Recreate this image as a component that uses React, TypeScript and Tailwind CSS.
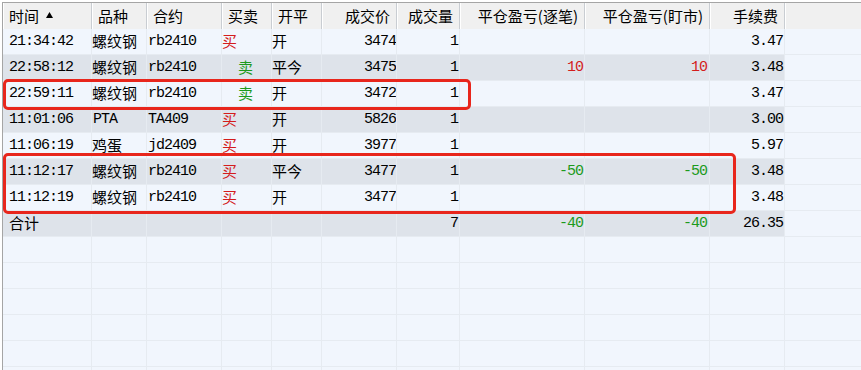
const COLS = [
  { key: 'time', label: '时间', w: 'w-[89px]', align: 'left' },
  { key: 'product', label: '品种', w: 'w-[55px]', align: 'left' },
  { key: 'contract', label: '合约', w: 'w-[75px]', align: 'left' },
  { key: 'side', label: '买卖', w: 'w-[50px]', align: 'left' },
  { key: 'offset', label: '开平', w: 'w-[50px]', align: 'left' },
  { key: 'price', label: '成交价', w: 'w-[75px]', align: 'right' },
  { key: 'vol', label: '成交量', w: 'w-[63px]', align: 'right' },
  { key: 'pnl1', label: '平仓盈亏(逐笔)', w: 'w-[125px]', align: 'right' },
  { key: 'pnl2', label: '平仓盈亏(盯市)', w: 'w-[125px]', align: 'right' },
  { key: 'fee', label: '手续费', w: 'w-[75px]', align: 'right' },
] as const;

type Trade = {
  time: string;
  product: string;
  contract: string;
  side: '买' | '卖' | '';
  offset: string;
  price: string;
  vol: string;
  pnl1: string;
  pnl2: string;
  fee: string;
};

const TRADES: Trade[] = [
  { time: '21:34:42', product: '螺纹钢', contract: 'rb2410', side: '买', offset: '开', price: '3474', vol: '1', pnl1: '', pnl2: '', fee: '3.47' },
  { time: '22:58:12', product: '螺纹钢', contract: 'rb2410', side: '卖', offset: '平今', price: '3475', vol: '1', pnl1: '10', pnl2: '10', fee: '3.48' },
  { time: '22:59:11', product: '螺纹钢', contract: 'rb2410', side: '卖', offset: '开', price: '3472', vol: '1', pnl1: '', pnl2: '', fee: '3.47' },
  { time: '11:01:06', product: 'PTA', contract: 'TA409', side: '买', offset: '开', price: '5826', vol: '1', pnl1: '', pnl2: '', fee: '3.00' },
  { time: '11:06:19', product: '鸡蛋', contract: 'jd2409', side: '买', offset: '开', price: '3977', vol: '1', pnl1: '', pnl2: '', fee: '5.97' },
  { time: '11:12:17', product: '螺纹钢', contract: 'rb2410', side: '买', offset: '平今', price: '3477', vol: '1', pnl1: '-50', pnl2: '-50', fee: '3.48' },
  { time: '11:12:19', product: '螺纹钢', contract: 'rb2410', side: '买', offset: '开', price: '3477', vol: '1', pnl1: '', pnl2: '', fee: '3.48' },
];

const TOTAL: Trade = {
  time: '合计', product: '', contract: '', side: '', offset: '', price: '', vol: '7', pnl1: '-40', pnl2: '-40', fee: '26.35',
};

const CJK = "font-['Noto_Sans_CJK_SC',sans-serif] text-[15px]";
// monospace cells sit a touch lower so digits line up with the CJK glyphs
const MONO = "font-['Liberation_Mono','Noto_Sans_CJK_SC',monospace] text-[15px] tracking-[-1px] pt-[2px]";

function pnlColor(v: string) {
  if (!v) return '';
  return v.startsWith('-') ? 'text-[#1c9a1c]' : 'text-[#d41c1c]';
}

function SortArrow() {
  return (
    <svg width="7" height="6" viewBox="0 0 7 6" className="ml-[7px] mb-[3px]">
      <polygon points="3.5,0 7,6 0,6" fill="#000" />
    </svg>
  );
}

function HeaderRow() {
  return (
    <div className="flex h-[26px] bg-[#f0f0f0]">
      {COLS.map((c) => (
        <div
          key={c.key}
          className={`${c.w} ${CJK} flex shrink-0 items-center border-r border-[#c9cdd2] text-black shadow-[inset_1px_0_0_#ffffff] ${
            c.align === 'right' ? 'justify-end pr-[6px]' : 'pl-[6px]'
          }`}
        >
          {c.label}
          {c.key === 'time' && <SortArrow />}
        </div>
      ))}
      <div className="flex-1 shadow-[inset_1px_0_0_#ffffff]" />
    </div>
  );
}

function Row({ t, striped, total }: { t?: Trade; striped: boolean; total?: boolean }) {
  const bg = striped ? 'bg-[#dee3ea]' : 'bg-[#f1f6fd]';
  const cell = `flex shrink-0 items-center border-r border-[#e6ebf1] overflow-hidden whitespace-pre ${bg}`;

  return (
    <div className="flex h-[26px] border-b border-[#e6ebf1]">
      <div className={`${cell} w-[89px] pl-[6px] ${total ? CJK : MONO}`}>{t?.time}</div>
      <div className={`${cell} w-[55px] ${t && /^[A-Za-z]/.test(t.product) ? MONO + ' pl-[1px]' : CJK}`}>{t?.product}</div>
      <div className={`${cell} w-[75px] pl-[1px] ${MONO}`}>{t?.contract}</div>
      <div
        className={`${cell} w-[50px] ${CJK} ${
          t?.side === '买' ? 'text-[#d41c1c]' : 'pl-[16px] text-[#1c9a1c]'
        }`}
      >
        {t?.side}
      </div>
      <div className={`${cell} w-[50px] ${CJK}`}>{t?.offset}</div>
      <div className={`${cell} w-[75px] justify-end ${MONO}`}>{t?.price}</div>
      <div className={`${cell} w-[63px] justify-end pr-[1px] ${MONO}`}>{t?.vol}</div>
      <div className={`${cell} w-[125px] justify-end pr-[1px] ${MONO} ${pnlColor(t?.pnl1 ?? '')}`}>{t?.pnl1}</div>
      <div className={`${cell} w-[125px] justify-end pr-[2px] ${MONO} ${pnlColor(t?.pnl2 ?? '')}`}>{t?.pnl2}</div>
      <div className={`${cell} w-[75px] justify-end pr-[1px] ${MONO}`}>{t?.fee}</div>
      <div className="flex-1 bg-[#f1f6fd]" />
    </div>
  );
}

export default function App() {
  return (
    <div className="h-[370px] w-[861px] overflow-hidden bg-white pl-[2px] pt-[2px] text-black">
      <div className="relative h-full border-l border-t border-[#a5a5a5] bg-[#f1f6fd]">
        <HeaderRow />
        {TRADES.map((t, i) => (
          <Row key={i} t={t} striped={i % 2 === 1} />
        ))}
        <Row t={TOTAL} striped total />
        {Array.from({ length: 6 }).map((_, i) => (
          <Row key={`e${i}`} striped={false} />
        ))}

        {/* highlight boxes drawn over the grid */}
        <div className="pointer-events-none absolute left-0 top-[76px] h-[31px] w-[468px] rounded-[5px] border-[3px] border-[#e8261c]" />
        <div className="pointer-events-none absolute left-0 top-[150px] h-[61px] w-[733px] rounded-[5px] border-[3px] border-[#e8261c]" />
      </div>
    </div>
  );
}
